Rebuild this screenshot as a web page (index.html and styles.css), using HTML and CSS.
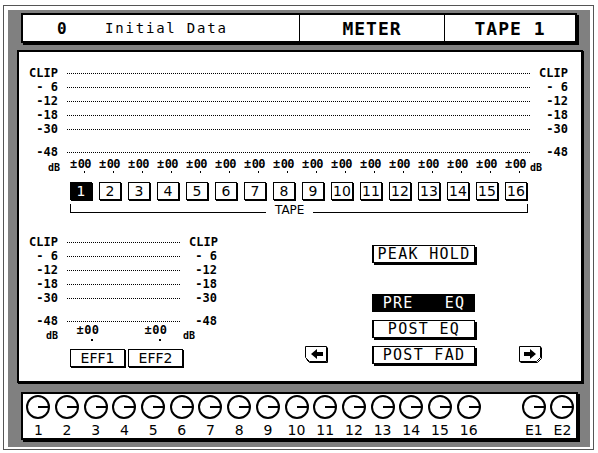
FILE: index.html
```html
<!DOCTYPE html>
<html>
<head>
<meta charset="utf-8">
<title>METER - TAPE 1</title>
<link rel="stylesheet" href="styles.css">
</head>
<body>
<div class="frame">
  <div class="bezel">
    <div class="header">
      <div class="cell cell-title"><span class="scene">0</span><span class="title">Initial Data</span></div>
      <div class="cell cell-page">METER</div>
      <div class="cell cell-mode">TAPE 1</div>
    </div>

    <div class="main">
      <div class="meter meter-wide">
        <div class="mrow"><span class="lbl">CLIP</span><span class="dots"></span><span class="lbl">CLIP</span></div>
        <div class="mrow"><span class="lbl">- 6</span><span class="dots"></span><span class="lbl">- 6</span></div>
        <div class="mrow"><span class="lbl">-12</span><span class="dots"></span><span class="lbl">-12</span></div>
        <div class="mrow"><span class="lbl">-18</span><span class="dots"></span><span class="lbl">-18</span></div>
        <div class="mrow"><span class="lbl">-30</span><span class="dots"></span><span class="lbl">-30</span></div>
        <div class="mrow low"><span class="lbl">-48</span><span class="dots"></span><span class="lbl">-48</span></div>
      </div>

      <div class="values">
        <span class="db db-l">dB</span>
        <span class="val">±0<i class="dp"></i>0</span>
        <span class="val">±0<i class="dp"></i>0</span>
        <span class="val">±0<i class="dp"></i>0</span>
        <span class="val">±0<i class="dp"></i>0</span>
        <span class="val">±0<i class="dp"></i>0</span>
        <span class="val">±0<i class="dp"></i>0</span>
        <span class="val">±0<i class="dp"></i>0</span>
        <span class="val">±0<i class="dp"></i>0</span>
        <span class="val">±0<i class="dp"></i>0</span>
        <span class="val">±0<i class="dp"></i>0</span>
        <span class="val">±0<i class="dp"></i>0</span>
        <span class="val">±0<i class="dp"></i>0</span>
        <span class="val">±0<i class="dp"></i>0</span>
        <span class="val">±0<i class="dp"></i>0</span>
        <span class="val">±0<i class="dp"></i>0</span>
        <span class="val">±0<i class="dp"></i>0</span>
        <span class="db db-r">dB</span>
      </div>

      <div class="chans">
        <span class="ch on">1</span>
        <span class="ch">2</span>
        <span class="ch">3</span>
        <span class="ch">4</span>
        <span class="ch">5</span>
        <span class="ch">6</span>
        <span class="ch">7</span>
        <span class="ch">8</span>
        <span class="ch">9</span>
        <span class="ch">10</span>
        <span class="ch">11</span>
        <span class="ch">12</span>
        <span class="ch">13</span>
        <span class="ch">14</span>
        <span class="ch">15</span>
        <span class="ch">16</span>
      </div>

      <div class="bracket"><span class="bl bl-first"></span><span class="bt">TAPE</span><span class="bl"></span></div>

      <div class="lower">
        <div class="eff">
          <div class="meter meter-narrow">
            <div class="mrow"><span class="lbl">CLIP</span><span class="dots"></span><span class="lbl">CLIP</span></div>
            <div class="mrow"><span class="lbl">- 6</span><span class="dots"></span><span class="lbl">- 6</span></div>
            <div class="mrow"><span class="lbl">-12</span><span class="dots"></span><span class="lbl">-12</span></div>
            <div class="mrow"><span class="lbl">-18</span><span class="dots"></span><span class="lbl">-18</span></div>
            <div class="mrow"><span class="lbl">-30</span><span class="dots"></span><span class="lbl">-30</span></div>
            <div class="mrow low"><span class="lbl">-48</span><span class="dots"></span><span class="lbl">-48</span></div>
          </div>
          <div class="eff-vals">
            <span class="db eff-db-l">dB</span>
            <span class="val eff-v1">±0<i class="dp"></i>0</span>
            <span class="val eff-v2">±0<i class="dp"></i>0</span>
            <span class="db eff-db-r">dB</span>
          </div>
          <div class="eff-btns">
            <span class="effbox">EFF1</span>
            <span class="effbox">EFF2</span>
          </div>
        </div>

        <div class="ctrl">
          <span class="btn b-peak">PEAK HOLD</span>
          <span class="btn inv b-pre">PRE   EQ</span>
          <span class="btn b-post">POST EQ</span>
          <span class="arrow arrow-l">
            <svg width="25" height="18" viewBox="0 0 25 18">
              <path d="M0.5 0.5H21.5V15.5H4.5L0.5 11.5Z" fill="#fff" stroke="#000"/>
              <path d="M22.5 1.5V16.5H4.5L1.5 13.5" fill="none" stroke="#000"/>
              <path d="M6 8L12 3V6H18V10H12V13Z" fill="#000"/>
            </svg>
          </span>
          <span class="btn b-fad">POST FAD</span>
          <span class="arrow arrow-r">
            <svg width="25" height="18" viewBox="0 0 25 18">
              <path d="M0.5 0.5H21.5V11.5L17.5 15.5H0.5Z" fill="#fff" stroke="#000"/>
              <path d="M22.5 1.5V12.5L18.5 16.5H1.5" fill="none" stroke="#000"/>
              <path d="M17 8L11 3V6H5V10H11V13Z" fill="#000"/>
            </svg>
          </span>
        </div>
      </div>
    </div>

    <div class="strip">
      <div class="knob"><svg width="24" height="24" viewBox="0 0 24 24"><circle cx="12" cy="12" r="11" fill="#fff" stroke="#000" stroke-width="2"/><path d="M12 12H23" stroke="#000" stroke-width="2"/></svg><span>1</span></div>
      <div class="knob"><svg width="24" height="24" viewBox="0 0 24 24"><circle cx="12" cy="12" r="11" fill="#fff" stroke="#000" stroke-width="2"/><path d="M12 12H23" stroke="#000" stroke-width="2"/></svg><span>2</span></div>
      <div class="knob"><svg width="24" height="24" viewBox="0 0 24 24"><circle cx="12" cy="12" r="11" fill="#fff" stroke="#000" stroke-width="2"/><path d="M12 12H23" stroke="#000" stroke-width="2"/></svg><span>3</span></div>
      <div class="knob"><svg width="24" height="24" viewBox="0 0 24 24"><circle cx="12" cy="12" r="11" fill="#fff" stroke="#000" stroke-width="2"/><path d="M12 12H23" stroke="#000" stroke-width="2"/></svg><span>4</span></div>
      <div class="knob"><svg width="24" height="24" viewBox="0 0 24 24"><circle cx="12" cy="12" r="11" fill="#fff" stroke="#000" stroke-width="2"/><path d="M12 12H23" stroke="#000" stroke-width="2"/></svg><span>5</span></div>
      <div class="knob"><svg width="24" height="24" viewBox="0 0 24 24"><circle cx="12" cy="12" r="11" fill="#fff" stroke="#000" stroke-width="2"/><path d="M12 12H23" stroke="#000" stroke-width="2"/></svg><span>6</span></div>
      <div class="knob"><svg width="24" height="24" viewBox="0 0 24 24"><circle cx="12" cy="12" r="11" fill="#fff" stroke="#000" stroke-width="2"/><path d="M12 12H23" stroke="#000" stroke-width="2"/></svg><span>7</span></div>
      <div class="knob"><svg width="24" height="24" viewBox="0 0 24 24"><circle cx="12" cy="12" r="11" fill="#fff" stroke="#000" stroke-width="2"/><path d="M12 12H23" stroke="#000" stroke-width="2"/></svg><span>8</span></div>
      <div class="knob"><svg width="24" height="24" viewBox="0 0 24 24"><circle cx="12" cy="12" r="11" fill="#fff" stroke="#000" stroke-width="2"/><path d="M12 12H23" stroke="#000" stroke-width="2"/></svg><span>9</span></div>
      <div class="knob"><svg width="24" height="24" viewBox="0 0 24 24"><circle cx="12" cy="12" r="11" fill="#fff" stroke="#000" stroke-width="2"/><path d="M12 12H23" stroke="#000" stroke-width="2"/></svg><span>10</span></div>
      <div class="knob"><svg width="24" height="24" viewBox="0 0 24 24"><circle cx="12" cy="12" r="11" fill="#fff" stroke="#000" stroke-width="2"/><path d="M12 12H23" stroke="#000" stroke-width="2"/></svg><span>11</span></div>
      <div class="knob"><svg width="24" height="24" viewBox="0 0 24 24"><circle cx="12" cy="12" r="11" fill="#fff" stroke="#000" stroke-width="2"/><path d="M12 12H23" stroke="#000" stroke-width="2"/></svg><span>12</span></div>
      <div class="knob"><svg width="24" height="24" viewBox="0 0 24 24"><circle cx="12" cy="12" r="11" fill="#fff" stroke="#000" stroke-width="2"/><path d="M12 12H23" stroke="#000" stroke-width="2"/></svg><span>13</span></div>
      <div class="knob"><svg width="24" height="24" viewBox="0 0 24 24"><circle cx="12" cy="12" r="11" fill="#fff" stroke="#000" stroke-width="2"/><path d="M12 12H23" stroke="#000" stroke-width="2"/></svg><span>14</span></div>
      <div class="knob"><svg width="24" height="24" viewBox="0 0 24 24"><circle cx="12" cy="12" r="11" fill="#fff" stroke="#000" stroke-width="2"/><path d="M12 12H23" stroke="#000" stroke-width="2"/></svg><span>15</span></div>
      <div class="knob"><svg width="24" height="24" viewBox="0 0 24 24"><circle cx="12" cy="12" r="11" fill="#fff" stroke="#000" stroke-width="2"/><path d="M12 12H23" stroke="#000" stroke-width="2"/></svg><span>16</span></div>
      <div class="kgap"></div>
      <div class="knob"><svg width="24" height="24" viewBox="0 0 24 24"><circle cx="12" cy="12" r="11" fill="#fff" stroke="#000" stroke-width="2"/><path d="M12 12H23" stroke="#000" stroke-width="2"/></svg><span>E1</span></div>
      <div class="knob"><svg width="24" height="24" viewBox="0 0 24 24"><circle cx="12" cy="12" r="11" fill="#fff" stroke="#000" stroke-width="2"/><path d="M12 12H23" stroke="#000" stroke-width="2"/></svg><span>E2</span></div>
    </div>
  </div>
</div>
</body>
</html>
```

FILE: styles.css
```css
html, body {
  margin: 0;
  padding: 0;
  background: #fff;
  color: #000;
  font-family: "DejaVu Sans", sans-serif;
}

.frame {
  margin: 5px 0 0 3px;
  width: 591px;
  height: 445px;
  box-sizing: border-box;
  border: 1px solid #555;
  padding: 4px 3px 3px 4px;
}

.bezel {
  height: 437px;
  box-sizing: border-box;
  padding-top: 3px;
  display: flex;
  flex-direction: column;
  background: #808080;
}

/* ---------- header ---------- */
.header {
  margin: 0 13px;
  height: 30px;
  flex: none;
  box-sizing: border-box;
  border: 2px solid #000;
  box-shadow: 2px 2px 0 #000;
  background: #fff;
  display: flex;
}

.cell {
  display: flex;
  align-items: center;
  border-right: 1px solid #000;
  box-sizing: border-box;
}

.cell-title {
  width: 277px;
  padding-left: 34px;
}

.scene {
  width: 48px;
  font: bold 16px "DejaVu Sans Mono", monospace;
}

.title {
  font: 14px "DejaVu Sans Mono", monospace;
  letter-spacing: 1.8px;
}

.cell-page {
  width: 145px;
  justify-content: center;
  font: bold 18px "DejaVu Sans Mono", monospace;
  letter-spacing: 1px;
}

.cell-mode {
  flex: 1;
  border-right: 0;
  justify-content: center;
  font: bold 18px "DejaVu Sans Mono", monospace;
  letter-spacing: 1px;
}

/* ---------- main panel ---------- */
.main {
  margin: 7px 0 0 9px;
  width: 566px;
  height: 333px;
  flex: none;
  box-sizing: border-box;
  border: 2px solid #000;
  box-shadow: 1px 1px 0 #000;
  background: #fff;
  padding-top: 14px;
}

.mrow {
  display: grid;
  grid-template-columns: 39px 463px 29px;
  column-gap: 9px;
  height: 14px;
  align-items: center;
}

.meter-narrow .mrow {
  grid-template-columns: 39px 113px 28px;
}

.mrow.low {
  margin-top: 9px;
}

.lbl {
  font: bold 12px/14px "DejaVu Sans Mono", monospace;
  text-align: right;
  white-space: pre;
}

.dots {
  height: 1px;
  background: repeating-linear-gradient(to right, #000 0 1px, transparent 1px 2px);
}

.values {
  display: grid;
  grid-template-columns: repeat(18, 22px);
  grid-template-rows: 12px;
  column-gap: 7px;
  margin: -1px 0 0 22px;
}

.val {
  display: flex;
  justify-content: center;
  font: bold 12px/12px "DejaVu Sans Mono", monospace;
  letter-spacing: 0.5px;
  white-space: nowrap;
}

.dp {
  display: inline-block;
  width: 2px;
  height: 2px;
  background: #000;
  margin: 0 -1px;
  align-self: flex-end;
  transform: translateY(3px);
}

.db {
  display: flex;
  align-items: flex-end;
  height: 15px;
  font: bold 10px/10px "DejaVu Sans Mono", monospace;
}

.db-l {
  justify-content: flex-end;
  padding-right: 3px;
}

.db-r {
  margin-left: -4px;
}

.chans {
  display: flex;
  gap: 7px;
  margin: 12px 0 0 51px;
}

.ch {
  width: 22px;
  height: 18px;
  box-sizing: border-box;
  border: 1px solid #000;
  box-shadow: 1px 1px 0 #000;
  font: 14px/16px "DejaVu Sans", sans-serif;
  text-align: center;
}

.ch.on {
  background: #000;
  color: #fff;
}

.bracket {
  margin: 4px 0 0 51px;
  width: 458px;
  height: 9px;
  box-sizing: border-box;
  border-left: 1px solid #000;
  border-right: 1px solid #000;
  display: flex;
  align-items: flex-end;
}

.bl {
  flex: 1;
  border-bottom: 1px solid #000;
}

.bl-first {
  flex: none;
  width: 195px;
}

.bt {
  font: 12px/10px "DejaVu Sans", sans-serif;
  padding: 0 9px;
  margin-bottom: -2px;
}

/* ---------- lower section ---------- */
.lower {
  display: flex;
  margin-top: 22px;
}

.eff {
  width: 200px;
  flex: none;
}

.eff-vals {
  display: flex;
  height: 12px;
  margin-top: -2px;
}

.eff-db-l {
  width: 39px;
  justify-content: flex-end;
}

.eff-v1 {
  width: 24px;
  margin-left: 18px;
  margin-top: -2px;
}

.eff-v2 {
  width: 24px;
  margin-left: 44px;
  margin-top: -2px;
}

.eff-db-r {
  margin-left: 15px;
}

.eff-btns {
  display: flex;
  gap: 3px;
  margin: 11px 0 0 51px;
}

.effbox {
  width: 55px;
  height: 18px;
  box-sizing: border-box;
  border: 1px solid #000;
  box-shadow: 1px 1px 0 #000;
  font: 14px/16px "DejaVu Sans", sans-serif;
  text-align: center;
}

.ctrl {
  margin: 10px 0 0 86px;
  display: grid;
  grid-template-columns: 23px 103px 23px;
  column-gap: 44px;
  row-gap: 8px;
  align-content: start;
}

.btn {
  grid-column: 2;
  height: 18px;
  box-sizing: border-box;
  border: 1px solid #000;
  border-left-width: 2px;
  box-shadow: 2px 2px 0 #000;
  background: #fff;
  font: 15px/16px "DejaVu Sans Mono", monospace;
  letter-spacing: 1.3px;
  text-align: center;
  white-space: pre;
}

.btn.inv {
  background: #000;
  color: #fff;
  box-shadow: none;
}

.b-peak { grid-row: 1; margin-bottom: 23px; }
.b-pre  { grid-row: 2; }
.b-post { grid-row: 3; }
.b-fad  { grid-row: 4; }

.arrow {
  grid-row: 4;
  display: block;
  height: 18px;
}

.arrow svg {
  display: block;
}

.arrow-l { grid-column: 1; }
.arrow-r { grid-column: 3; }

/* ---------- knob strip ---------- */
.strip {
  margin: 9px 0 0 13px;
  width: 557px;
  height: 48px;
  flex: none;
  box-sizing: border-box;
  border: 2px solid #000;
  box-shadow: 2px 2px 0 #000;
  background: #fff;
  display: flex;
  padding-left: 1px;
}

.knob {
  width: 28.7px;
  flex: none;
  display: flex;
  flex-direction: column;
  align-items: center;
}

.knob svg {
  display: block;
  margin-top: 1px;
}

.knob span {
  font: 14px/12px "DejaVu Sans", sans-serif;
  margin-top: 5px;
}

.kgap {
  width: 36.45px;
  flex: none;
}
```
